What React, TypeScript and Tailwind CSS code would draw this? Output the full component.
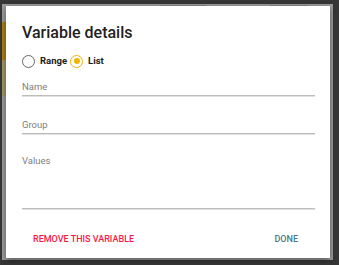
export default function App() {
  return (
    <div className="w-[339px] h-[265px] bg-[#363636] pt-[4px] pl-[2px] pr-[6px] pb-[5px] overflow-hidden font-[Roboto,'Liberation_Sans',sans-serif]">
      <div className="relative h-full bg-[#9c9c9c] pl-[4px] pt-[2px] pr-[3px] pb-[2px]">
        <div className="absolute left-0 top-[1px] right-0 h-[1px] flex">
          <div className="ml-[158px] w-[46px] h-[1px] bg-[#858585]" />
          <div className="ml-[64px] w-[38px] h-[1px] bg-[#858585]" />
        </div>
        <div className="absolute left-0 top-[18px] w-[4px] h-[38px] bg-[#ad7f15]" />
        <div className="absolute left-0 top-[56px] w-[4px] h-[36px] bg-[#a39769]" />
        <div className="relative h-full bg-white flex flex-col pl-[16px] pr-[15px] shadow-[0_2px_6px_rgba(0,0,0,0.45)]">
          <div className="pt-[17px] text-[16px] leading-[19px] font-medium text-[#212121]">Variable details</div>
          <div className="mt-[12px] h-[14px] flex items-center text-[9.5px] font-bold text-[#212121]">
            <span className="w-[13px] h-[13px] rounded-full border-[1.5px] border-[#666]" />
            <span className="ml-[5px]">Range</span>
            <span className="ml-[3px] w-[13px] h-[13px] rounded-full border-[1.5px] border-[#f5b300] flex items-center justify-center">
              <span className="w-[6px] h-[6px] rounded-full bg-[#f5b300]" />
            </span>
            <span className="ml-[5px]">List</span>
          </div>
          <div className="mt-[13px] text-[9.5px] leading-[11px] text-[#808080]">Name</div>
          <div className="mt-[3px] h-[1px] bg-[#bdbdbd]" />
          <div className="h-[1px] bg-[#e0e0e0]" />
          <div className="mt-[22px] text-[9.5px] leading-[11px] text-[#808080]">Group</div>
          <div className="mt-[3px] h-[1px] bg-[#bdbdbd]" />
          <div className="h-[1px] bg-[#e0e0e0]" />
          <div className="mt-[20px] text-[9.5px] leading-[11px] text-[#808080]">Values</div>
          <div className="mt-[42px] h-[1px] bg-[#bdbdbd]" />
          <div className="h-[1px] bg-[#e0e0e0]" />
          <div className="mt-[24px] flex justify-between pl-[11px] pr-[17px] text-[9px] leading-[11px] font-medium">
            <span className="text-[#ff1744]">REMOVE THIS VARIABLE</span>
            <span className="text-[#4a7a8c]">DONE</span>
          </div>
        </div>
      </div>
    </div>
  );
}
